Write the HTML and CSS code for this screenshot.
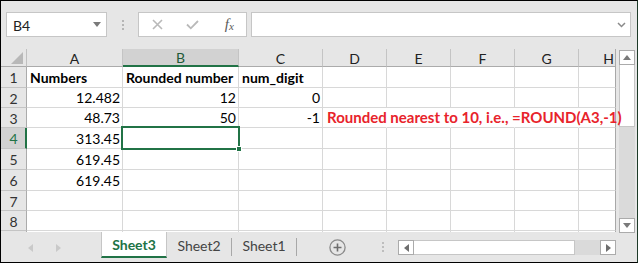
FILE: index.html
```html
<!DOCTYPE html>
<html>
<head>
<meta charset="utf-8">
<link rel="stylesheet" href="styles.css">
</head>
<body>
<div class="frame">
  <div class="fbar">
    <div class="namebox"><span class="nb-text">B4</span><svg class="caret" width="8" height="5" viewBox="0 0 8 5"><path d="M0 0H8L4 5Z" fill="#7a7a7a"/></svg></div>
    <div class="vdots"><i></i><i></i><i></i></div>
    <div class="fbtns">
      <span class="fbtn"><svg width="11" height="11" viewBox="0 0 11 11"><path d="M1 1L10 10M10 1L1 10" stroke="#b9b9b9" stroke-width="1.6"/></svg></span>
      <span class="fbtn"><svg width="13" height="11" viewBox="0 0 13 11"><path d="M1 5.5L4.8 9.3L12 2" fill="none" stroke="#b9b9b9" stroke-width="1.8"/></svg></span>
      <span class="fbtn fx">f<span class="fx-x">x</span></span>
    </div>
    <div class="finput"><svg class="chev" width="9" height="6" viewBox="0 0 9 6"><path d="M1 1L4.5 4.5L8 1" fill="none" stroke="#8a8a8a" stroke-width="1.5"/></svg></div>
  </div>

  <div class="main">
    <div class="grid">
      <div class="corner"><svg width="12" height="12" viewBox="0 0 12 12"><path d="M12 0V12H0Z" fill="#b8b8b8"/></svg></div>
      <div class="ch">A</div>
      <div class="ch sel">B</div>
      <div class="ch">C</div>
      <div class="ch">D</div>
      <div class="ch">E</div>
      <div class="ch">F</div>
      <div class="ch">G</div>
      <div class="ch last"><span class="hcut">H</span></div>

      <div class="rh">1</div>
      <div class="c b">Numbers</div>
      <div class="c b">Rounded number</div>
      <div class="c b">num_digit</div>
      <div class="c"></div><div class="c"></div><div class="c"></div><div class="c"></div><div class="c last"></div>

      <div class="rh">2</div>
      <div class="c r">12.482</div>
      <div class="c r">12</div>
      <div class="c r">0</div>
      <div class="c"></div><div class="c"></div><div class="c"></div><div class="c"></div><div class="c last"></div>

      <div class="rh">3</div>
      <div class="c r">48.73</div>
      <div class="c r">50</div>
      <div class="c r">-1</div>
      <div class="c nor over"><span class="note">Rounded nearest to 10, i.e., =ROUND(A3,-1)</span></div>
      <div class="c nor"></div><div class="c nor"></div><div class="c nor"></div><div class="c last"></div>

      <div class="rh sel">4</div>
      <div class="c r">313.45</div>
      <div class="c active"><span class="handle"></span></div>
      <div class="c"></div>
      <div class="c"></div><div class="c"></div><div class="c"></div><div class="c"></div><div class="c last"></div>

      <div class="rh">5</div>
      <div class="c r">619.45</div>
      <div class="c"></div><div class="c"></div>
      <div class="c"></div><div class="c"></div><div class="c"></div><div class="c"></div><div class="c last"></div>

      <div class="rh">6</div>
      <div class="c r">619.45</div>
      <div class="c"></div><div class="c"></div>
      <div class="c"></div><div class="c"></div><div class="c"></div><div class="c"></div><div class="c last"></div>

      <div class="rh">7</div>
      <div class="c"></div><div class="c"></div><div class="c"></div>
      <div class="c"></div><div class="c"></div><div class="c"></div><div class="c"></div><div class="c last"></div>

      <div class="rh">8</div>
      <div class="c"></div><div class="c"></div><div class="c"></div>
      <div class="c"></div><div class="c"></div><div class="c"></div><div class="c"></div><div class="c last"></div>

      <div class="rh stub"></div>
      <div class="c stub"></div><div class="c stub"></div><div class="c stub"></div>
      <div class="c stub"></div><div class="c stub"></div><div class="c stub"></div><div class="c stub"></div><div class="c stub last"></div>
    </div>

    <div class="vscroll">
      <div class="sbtn"><svg width="8" height="5" viewBox="0 0 8 5"><path d="M0 5H8L4 0Z" fill="#7a7a7a"/></svg></div>
      <div class="vthumb"></div>
      <div class="vtrack"></div>
      <div class="sbtn"><svg width="8" height="5" viewBox="0 0 8 5"><path d="M0 0H8L4 5Z" fill="#7a7a7a"/></svg></div>
    </div>
  </div>

  <div class="tabbar">
    <div class="nav">
      <svg width="5" height="8" viewBox="0 0 5 8"><path d="M5 0V8L0 4Z" fill="#c9c9c9"/></svg>
      <svg width="5" height="8" viewBox="0 0 5 8"><path d="M0 0V8L5 4Z" fill="#c9c9c9"/></svg>
    </div>
    <div class="tab active">Sheet3</div>
    <div class="tab">Sheet2</div>
    <div class="sep"></div>
    <div class="tab">Sheet1</div>
    <div class="sep"></div>
    <div class="add"><svg width="17" height="17" viewBox="0 0 17 17"><circle cx="8.5" cy="8.5" r="7.6" fill="none" stroke="#8a8a8a" stroke-width="1.3"/><path d="M8.5 4.5V12.5M4.5 8.5H12.5" stroke="#6e6e6e" stroke-width="1.6"/></svg></div>
    <div class="hdots"><i></i><i></i><i></i></div>
    <div class="hscroll">
      <div class="hbtn"><svg width="5" height="8" viewBox="0 0 5 8"><path d="M5 0V8L0 4Z" fill="#6e6e6e"/></svg></div>
      <div class="hthumb"></div>
      <div class="htrack"></div>
      <div class="hbtn"><svg width="5" height="8" viewBox="0 0 5 8"><path d="M0 0V8L5 4Z" fill="#6e6e6e"/></svg></div>
    </div>
  </div>
</div>
</body>
</html>
```

FILE: styles.css
```css
* { box-sizing: border-box; }
html, body { margin: 0; padding: 0; }
body {
  width: 638px;
  height: 263px;
  overflow: hidden;
  font-family: "Lato", "Liberation Sans", sans-serif;
  background: #e6e6e6;
}
.frame {
  width: 638px;
  height: 263px;
  border: 1px solid #000;
  border-right-color: #1d3a28;
  background: #e6e6e6;
  display: flex;
  flex-direction: column;
}

/* formula bar */
.fbar {
  height: 48px;
  flex: none;
  display: flex;
  align-items: flex-start;
  padding: 11px 0 0 5px;
}
.namebox {
  width: 101px;
  height: 25px;
  background: #fff;
  border: 1px solid #c6c6c6;
  display: flex;
  align-items: center;
  justify-content: space-between;
  padding: 0 5px 0 6px;
  font-size: 14px;
  color: #222;
}
.nb-text { padding-top: 1px; }
.vdots {
  width: 31px;
  height: 25px;
  display: flex;
  flex-direction: column;
  align-items: center;
  justify-content: center;
  gap: 2px;
}
.vdots i {
  display: block;
  width: 2px;
  height: 2px;
  background: #b5b5b5;
}
.fbtns {
  width: 109px;
  height: 25px;
  background: #fff;
  border: 1px solid #c6c6c6;
  display: flex;
  align-items: center;
  padding-left: 1px;
}
.fbtn {
  width: 36px;
  height: 23px;
  display: flex;
  align-items: center;
  justify-content: center;
}
.fx {
  font-family: "Liberation Serif", serif;
  font-style: italic;
  font-size: 15px;
  color: #5a5a5a;
  padding-left: 2px;
}
.fx-x { font-size: 11px; margin-top: 3px; }
.finput {
  width: 380px;
  height: 25px;
  margin-left: 4px;
  background: #fff;
  border: 1px solid #c6c6c6;
  display: flex;
  align-items: center;
  justify-content: flex-end;
  padding-right: 4px;
}

/* main */
.main {
  height: 183px;
  flex: none;
  display: flex;
  align-items: flex-start;
}
.grid {
  width: 615px;
  display: grid;
  grid-template-columns: 26px 96px 116px 84px 64px 64px 64px 64px 37px;
  grid-template-rows: 18px 21px 20px 20px 21px 21px 21px 20px 20px 1px;
  background: #fff;
}
.corner {
  background: #e6e6e6;
  border-right: 1px solid #c0c0c0;
  border-bottom: 1px solid #ababab;
  display: flex;
  align-items: flex-end;
  justify-content: flex-end;
  padding: 0 3px 2px 0;
}
.ch {
  background: #e6e6e6;
  border-right: 1px solid #c4c4c4;
  border-bottom: 1px solid #ababab;
  display: flex;
  align-items: center;
  justify-content: center;
  font-size: 14px;
  color: #222;
  padding-top: 1px;
}
.ch.sel {
  background: #d2d2d2;
  border-bottom: 2px solid #217346;
  color: #1f5a38;
}
.ch.last {
  border-right: 1px solid #ababab;
  justify-content: flex-end;
  overflow: hidden;
}
.hcut { margin-right: 1px; }
.rh {
  background: #e6e6e6;
  border-right: 1px solid #ababab;
  border-bottom: 1px solid #c4c4c4;
  display: flex;
  align-items: center;
  justify-content: center;
  font-size: 14px;
  color: #333;
  padding-top: 1px;
}
.rh.sel {
  background: #d2d2d2;
  border-right: 2px solid #217346;
  color: #217346;
  padding-left: 1px;
}
.c {
  border-right: 1px solid #d8d8d8;
  border-bottom: 1px solid #d8d8d8;
  font-size: 14px;
  color: #000;
  display: flex;
  align-items: flex-end;
  padding: 0 2px 1px 3px;
  white-space: nowrap;
  line-height: 17px;
}
.c.last { border-right: 1px solid #a8a8a8; }
.c.stub { border-bottom: none; }
.rh.stub { border-bottom: none; }
.c.b { font-weight: 700; }
.c.r { justify-content: flex-end; }
.c.nor { border-right-color: transparent; }
.c.over { overflow: visible; position: relative; z-index: 3; padding-left: 4px; }
.note {
  font-weight: 700;
  font-size: 15px;
  color: #e8232b;
}
.c.active { position: relative; }
.c.active::before {
  content: "";
  position: absolute;
  left: -2px;
  top: -2px;
  right: -2px;
  bottom: -2px;
  border: 2px solid #217346;
}
.handle {
  position: absolute;
  right: -4px;
  bottom: -4px;
  width: 6px;
  height: 6px;
  background: #217346;
  border: 1px solid #fff;
  z-index: 2;
}

/* vertical scrollbar */
.vscroll {
  width: 16px;
  margin-left: 3px;
  margin-top: 1px;
  position: relative;
  z-index: 2;
  display: flex;
  flex-direction: column;
}
.sbtn {
  width: 16px;
  height: 15px;
  background: #fff;
  border: 1px solid #ababab;
  display: flex;
  align-items: center;
  justify-content: center;
}
.vthumb {
  height: 62px;
  background: #fff;
  border: 1px solid #c6c6c6;
  border-top: none;
}
.vtrack {
  height: 91px;
  background: #dadada;
}

/* tab bar */
.tabbar {
  height: 30px;
  flex: none;
  display: flex;
  align-items: flex-start;
  font-size: 14px;
}
.nav {
  width: 100px;
  height: 30px;
  display: flex;
  align-items: center;
  padding-left: 27px;
  gap: 23px;
  padding-top: 2px;
}
.tab {
  width: 64px;
  height: 25px;
  display: flex;
  align-items: center;
  justify-content: center;
  color: #444;
  margin-top: 1px;
}
.tab.active {
  width: 66px;
  height: 26px;
  margin-top: 0;
  background: #fff;
  border-left: 1px solid #c6c6c6;
  border-right: 1px solid #c6c6c6;
  border-bottom: 2px solid #217346;
  font-weight: 700;
  color: #217346;
  padding-top: 1px;
}
.sep {
  width: 1px;
  height: 18px;
  margin-top: 6px;
  background: #a8a8a8;
}
.add {
  margin: 7px 0 0 32px;
  width: 17px;
  height: 17px;
  display: flex;
}
.hdots {
  margin: 10px 0 0 36px;
  display: flex;
  flex-direction: column;
  gap: 2px;
}
.hdots i {
  display: block;
  width: 2px;
  height: 2px;
  background: #bdbdbd;
}
.hscroll {
  margin: 8px 0 0 14px;
  height: 15px;
  display: flex;
}
.hbtn {
  width: 16px;
  height: 15px;
  background: #fff;
  border: 1px solid #ababab;
  display: flex;
  align-items: center;
  justify-content: center;
}
.hthumb {
  width: 161px;
  background: #fff;
  border: 1px solid #c6c6c6;
  border-left: none;
}
.htrack {
  width: 25px;
  background: #dadada;
}
```
